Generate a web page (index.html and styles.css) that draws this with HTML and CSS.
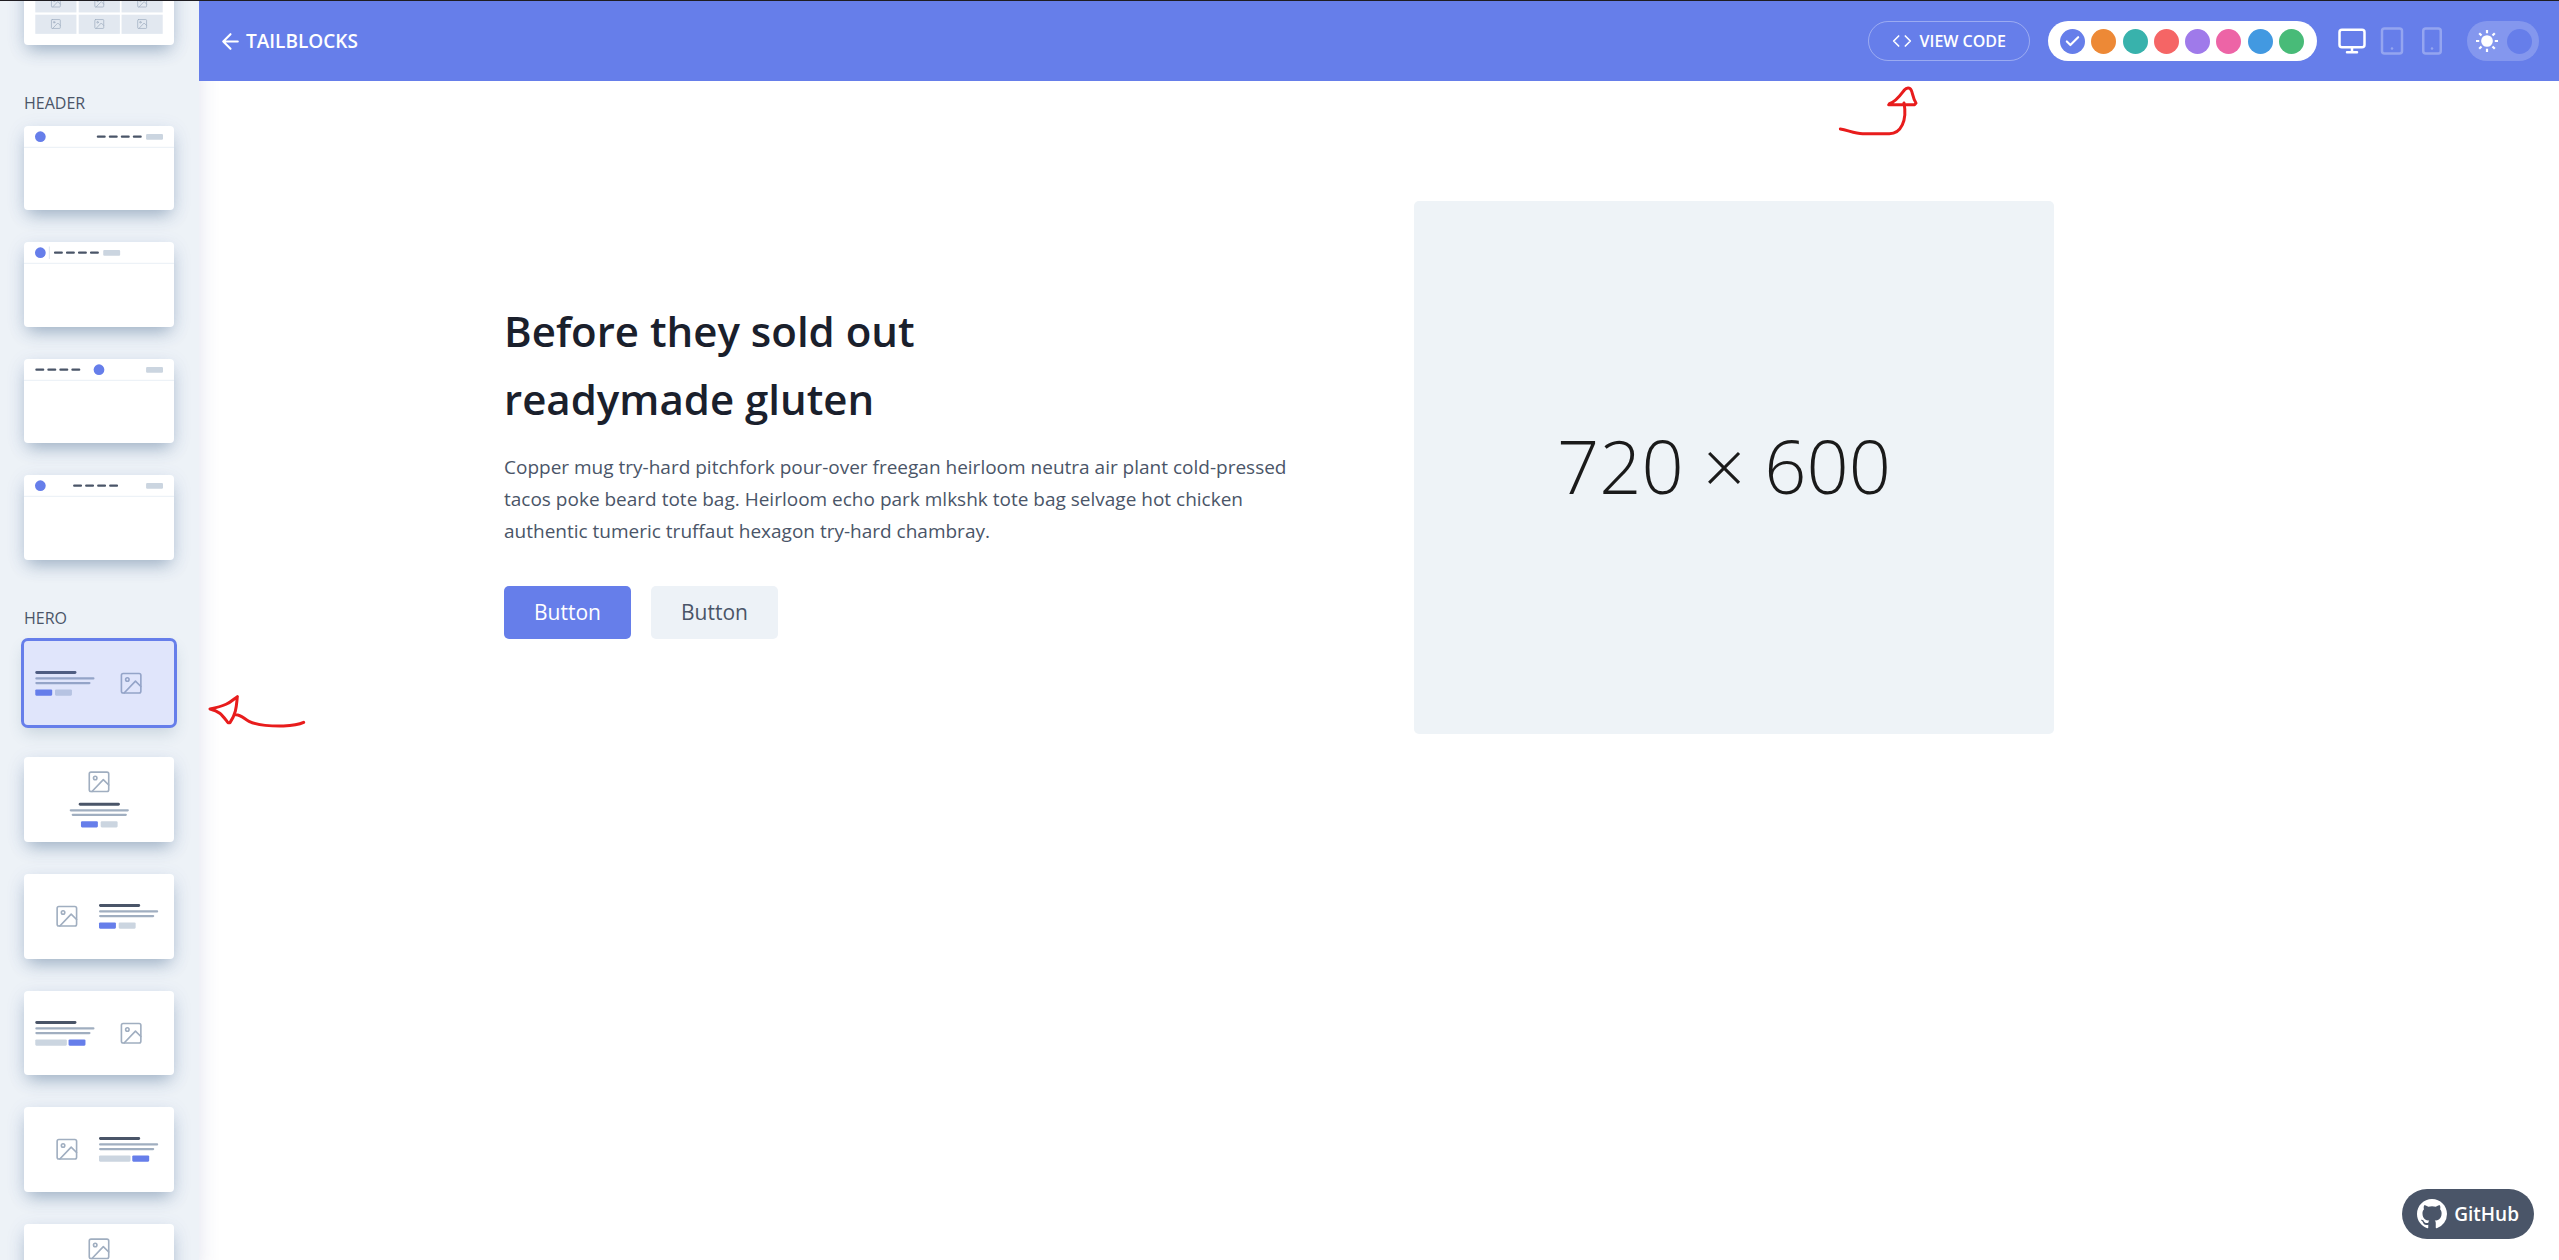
FILE: index.html
```html
<!DOCTYPE html>
<html lang="en">
<head>
<meta charset="utf-8">
<title>Tailblocks</title>
<link rel="stylesheet" href="styles.css">
</head>
<body>
<svg class="defs" aria-hidden="true">
  <defs>
    <symbol id="pic" viewBox="0 0 24 24"><g fill="none" stroke="#a0aec0" stroke-width="1.5" stroke-linecap="round" stroke-linejoin="round"><rect x="3" y="3" width="18" height="18" rx="1.6"/><circle cx="8.5" cy="8.5" r="1.6"/><path d="M21 15l-5-5L5.500 21"/></g></symbol>
    <g id="nav"><path d="M2 19h12M23.300 19h12M44.600 19h12M65.900 19h12" stroke="#4a5568" stroke-width="4" stroke-linecap="round"/></g>
    <g id="bar"><path d="M0 38h266" stroke="#edf2f7" stroke-width="2"/></g>
    <g id="copy"><rect y="53" width="73" height="5.500" rx="2.500" fill="#4a5568"/><rect y="64.500" width="105" height="4" rx="2" fill="#a0aec0"/><rect y="72.500" width="98" height="4" rx="2" fill="#a0aec0"/></g>
    <g id="buttons"><rect width="30" height="11" rx="2" fill="#667eea"/><rect x="35" width="30" height="11" rx="2" fill="#cbd5e0"/></g>
    <g id="form"><rect width="56" height="11" rx="2" fill="#cbd5e0"/><rect x="59" width="30" height="11" rx="2" fill="#667eea"/></g>
    <g id="cell"><rect width="73" height="34" fill="#e2e8f0"/><use href="#pic" x="26" y="6" width="21" height="21"/></g>
  </defs>
</svg>
<div class="app">
  <aside class="sidebar">
    <div class="blocks">
      <div class="group">
        <button class="block" aria-label="Gallery"><svg viewBox="0 0 266 150"><use href="#cell" x="20" y="20"/><use href="#cell" x="97" y="20"/><use href="#cell" x="173" y="20"/><use href="#cell" x="20" y="59"/><use href="#cell" x="97" y="59"/><use href="#cell" x="173" y="59"/><use href="#cell" x="20" y="97"/><use href="#cell" x="97" y="97"/><use href="#cell" x="173" y="97"/></svg></button>
      </div>
      <section class="group">
        <h2 class="group-title">HEADER</h2>
        <button class="block" aria-label="Header A"><svg viewBox="0 0 266 150"><use href="#bar"/><circle cx="29" cy="19" r="9.500" fill="#667eea"/><use href="#nav" x="129"/><rect x="216.500" y="14" width="30" height="10.500" rx="2" fill="#cbd5e0"/></svg></button>
        <button class="block" aria-label="Header B"><svg viewBox="0 0 266 150"><use href="#bar"/><circle cx="29" cy="19" r="9.500" fill="#667eea"/><path d="M45 8v22" stroke="#e2e8f0" stroke-width="2"/><use href="#nav" x="53"/><rect x="140.500" y="14" width="30" height="10.500" rx="2" fill="#cbd5e0"/></svg></button>
        <button class="block" aria-label="Header C"><svg viewBox="0 0 266 150"><use href="#bar"/><circle cx="133" cy="19" r="9.500" fill="#667eea"/><use href="#nav" x="20"/><rect x="216.500" y="14" width="30" height="10.500" rx="2" fill="#cbd5e0"/></svg></button>
        <button class="block" aria-label="Header D"><svg viewBox="0 0 266 150"><use href="#bar"/><circle cx="29" cy="19" r="9.500" fill="#667eea"/><use href="#nav" x="87"/><rect x="216.500" y="14" width="30" height="10.500" rx="2" fill="#cbd5e0"/></svg></button>
      </section>
      <section class="group">
        <h2 class="group-title">HERO</h2>
        <button class="block active" aria-label="Hero A" aria-pressed="true"><svg viewBox="0 0 266 150"><use href="#copy" x="20"/><use href="#buttons" x="20" y="86"/><use href="#pic" x="167" y="52" width="46" height="46"/><path d="M0 0h266v150H0z" fill="#667eea" opacity=".2"/></svg></button>
        <button class="block" aria-label="Hero B"><svg viewBox="0 0 266 150"><use href="#pic" x="110" y="21" width="46" height="46"/><rect x="97" y="81" width="73" height="5.500" rx="2.500" fill="#4a5568"/><rect x="81" y="92.500" width="105" height="4" rx="2" fill="#a0aec0"/><rect x="84.500" y="100.500" width="98" height="4" rx="2" fill="#a0aec0"/><use href="#buttons" x="101" y="114"/></svg></button>
        <button class="block" aria-label="Hero C"><svg viewBox="0 0 266 150"><use href="#pic" x="53" y="52" width="46" height="46"/><use href="#copy" x="133"/><use href="#buttons" x="133" y="86"/></svg></button>
        <button class="block" aria-label="Hero D"><svg viewBox="0 0 266 150"><use href="#copy" x="20"/><use href="#form" x="20" y="86"/><use href="#pic" x="167" y="52" width="46" height="46"/></svg></button>
        <button class="block" aria-label="Hero E"><svg viewBox="0 0 266 150"><use href="#pic" x="53" y="52" width="46" height="46"/><use href="#copy" x="133"/><use href="#form" x="133" y="86"/></svg></button>
        <button class="block" aria-label="Hero F"><svg viewBox="0 0 266 150"><use href="#pic" x="110" y="21" width="46" height="46"/><rect x="97" y="81" width="73" height="5.500" rx="2.500" fill="#4a5568"/><rect x="81" y="92.500" width="105" height="4" rx="2" fill="#a0aec0"/><use href="#form" x="88" y="114"/></svg></button>
      </section>
    </div>
  </aside>
  <div class="page">
    <header class="toolbar">
      <a class="brand" href="#"><svg width="25" height="25" viewBox="0 0 24 24" fill="none" stroke="currentColor" stroke-width="2" stroke-linecap="round" stroke-linejoin="round"><path d="M19 12H5M12 19l-7-7 7-7"/></svg>TAILBLOCKS</a>
      <button class="view-code"><svg width="20" height="20" viewBox="0 0 24 24" fill="none" stroke="currentColor" stroke-width="2" stroke-linecap="round" stroke-linejoin="round"><path d="M16 18l6-6-6-6M8 6l-6 6 6 6"/></svg>VIEW CODE</button>
      <div class="palette" role="radiogroup" aria-label="Theme colour">
        <label class="swatch"><input type="radio" name="theme" class="indigo" aria-label="Indigo" checked><svg width="17" height="17" viewBox="0 0 24 24" fill="none" stroke="#fff" stroke-width="3" stroke-linecap="round" stroke-linejoin="round"><path d="M20 6L9 17l-5-5"/></svg></label>
        <label class="swatch"><input type="radio" name="theme" class="orange" aria-label="Orange"></label>
        <label class="swatch"><input type="radio" name="theme" class="teal" aria-label="Teal"></label>
        <label class="swatch"><input type="radio" name="theme" class="red" aria-label="Red"></label>
        <label class="swatch"><input type="radio" name="theme" class="purple" aria-label="Purple"></label>
        <label class="swatch"><input type="radio" name="theme" class="pink" aria-label="Pink"></label>
        <label class="swatch"><input type="radio" name="theme" class="blue" aria-label="Blue"></label>
        <label class="swatch"><input type="radio" name="theme" class="green" aria-label="Green"></label>
      </div>
      <div class="devices">
        <button class="device current" aria-label="Desktop"><svg width="30" height="30" viewBox="0 0 24 24"><rect x="2" y="3" width="20" height="14" rx="2"/><path d="M8 21h8M12 17v4"/></svg></button>
        <button class="device" aria-label="Tablet"><svg width="30" height="30" viewBox="0 0 24 24"><rect x="4" y="2" width="16" height="20" rx="2"/><path d="M12 18h.01"/></svg></button>
        <button class="device" aria-label="Phone"><svg width="30" height="30" viewBox="0 0 24 24"><rect x="5" y="2" width="14" height="20" rx="2"/><path d="M12 18h.01"/></svg></button>
      </div>
      <label class="mode"><svg width="22" height="22" viewBox="0 0 24 24" fill="#fff" stroke="#fff" stroke-width="2.400"><circle cx="12" cy="12" r="5.200"/><path d="M12 0v3.500M12 20.500V24M0 12h3.500M20.500 12H24M3.500 3.500L6 6M18 18l2.500 2.500M3.500 20.500L6 18M18 6l2.500-2.500"/></svg><input type="checkbox" aria-label="Dark mode"></label>
    </header>
    <main class="preview">
      <section class="hero">
        <div class="hero-text">
          <h1>Before they sold out<br>readymade gluten</h1>
          <p>Copper mug try-hard pitchfork pour-over freegan heirloom neutra air plant cold-pressed tacos poke beard tote bag. Heirloom echo park mlkshk tote bag selvage hot chicken authentic tumeric truffaut hexagon try-hard chambray.</p>
          <div class="actions">
            <button class="btn primary">Button</button>
            <button class="btn">Button</button>
          </div>
        </div>
        <div class="placeholder">720 × 600</div>
      </section>
      <svg class="mark mark-code" width="90" height="60" viewBox="0 0 270 180"><path d="M13 144C35 147 55 158 80 158H160C195 158 214 118 204 66M158 71H236L240 66C231 53 230 36 226 28C221 18 211 20 205 27C195 40 180 63 160 68"/></svg>
      <svg class="mark mark-hero" width="106" height="46" viewBox="0 0 318 138"><path d="M311 97C288 108 265 107 240 108C205 108 170 105 147 94C134 88 123 73 107 74M112 20C93 32 90 45 30 57C60 64 66 75 84 98H90C110 68 109 46 112 20"/></svg>
    </main>
  </div>
</div>
<a class="github" href="#"><svg width="30" height="30" viewBox="0 0 16 16" fill="#fff"><path d="M8 0C3.580 0 0 3.580 0 8c0 3.540 2.290 6.530 5.470 7.590.4.070.55-.17.55-.38 0-.19-.01-.82-.01-1.490-2.010.37-2.530-.49-2.690-.94-.09-.23-.48-.94-.82-1.130-.28-.15-.68-.52-.01-.53.63-.01 1.080.58 1.230.82.72 1.210 1.870.87 2.330.66.07-.52.28-.87.51-1.070-1.780-.2-3.640-.89-3.640-3.950 0-.87.31-1.590.82-2.150-.08-.2-.36-1.020.08-2.120 0 0 .67-.21 2.200.82.64-.18 1.320-.27 2-.27s1.360.09 2 .27c1.530-1.040 2.200-.82 2.200-.82.44 1.100.16 1.920.08 2.120.51.56.82 1.270.82 2.150 0 3.070-1.870 3.750-3.650 3.950.29.25.54.73.54 1.480 0 1.070-.01 1.930-.01 2.200 0 .21.15.46.55.38A8.010 8.010 0 0 0 16 8c0-4.420-3.580-8-8-8z"/></svg>GitHub</a>
</body>
</html>
```
FILE: styles.css
```css
*, *::before, *::after { box-sizing: border-box; }
body {
  margin: 0;
  color: #4a5568;
  background: #fff;
  font-family: "Open Sans", "Noto Sans", sans-serif;
}
h1, h2, p { margin: 0; }
button, input { margin: 0; padding: 0; border: 0; font: inherit; color: inherit; background: none; cursor: pointer; }
a { color: inherit; text-decoration: none; }
svg { display: block; flex: none; }
.defs { position: absolute; width: 0; height: 0; }

.app {
  display: grid;
  grid-template-columns: 199px 1fr;
  height: 100vh;
  border-top: 1px solid #1f1d22;
  overflow: hidden;
}

/* Block list */
.sidebar {
  position: relative;
  z-index: 1;
  min-height: 0;
  padding: 0 25px 0 24px;
  background: #edf2f7;
  box-shadow: 0 10px 20px rgba(60, 70, 140, .16);
  overflow: hidden;
}
/* The list rests scrolled past its first groups */
.blocks { margin-top: -41px; }
.group { display: flex; flex-direction: column; gap: 32px; padding-bottom: 47px; }
.group-title { margin-bottom: -20px; font-size: 16px; line-height: 22px; font-weight: 500; }
.block {
  border-radius: 4px;
  background: #fff;
  box-shadow: 0 8px 16px -4px rgba(50, 90, 120, .4), 0 4px 20px rgba(90, 110, 200, .1);
}
.block svg { width: 100%; height: auto; border-radius: 4px; }
.block.active { box-shadow: 0 0 0 3px #667eea, 0 8px 16px rgba(50, 90, 120, .2); }

/* Toolbar */
.page { position: relative; display: flex; flex-direction: column; min-width: 0; }
.toolbar {
  position: relative;
  z-index: 2;
  display: flex;
  align-items: center;
  height: 80px;
  padding: 0 20px 0 19px;
  color: #fff;
  background: #667eea;
}
.brand { display: flex; align-items: center; gap: 3px; margin-right: auto; font-size: 19px; line-height: 28px; font-weight: 600; }
.view-code {
  display: flex;
  align-items: center;
  gap: 8px;
  height: 40px;
  padding: 0 23px;
  border: 1px solid rgba(255, 255, 255, .35);
  border-radius: 20px;
  font-size: 16px;
  line-height: 22px;
  font-weight: 600;
}
.palette { display: flex; align-items: center; justify-content: space-between; width: 269px; height: 40px; margin-left: 18px; padding: 0 13px 0 12px; border-radius: 20px; background: #fff; }
.swatch { display: grid; place-items: center; }
.swatch > * { grid-area: 1 / 1; }
.swatch svg { pointer-events: none; z-index: 1; }
.swatch input { appearance: none; width: 25px; height: 25px; border-radius: 50%; }
.indigo { background: #667eea; }
.orange { background: #ed8936; }
.teal { background: #38b2ac; }
.red { background: #f56565; }
.purple { background: #9f7aea; }
.pink { background: #ed64a6; }
.blue { background: #4299e1; }
.green { background: #48bb78; }
.devices { display: flex; gap: 10px; margin: 0 20px; }
.device { opacity: .3; }
.device.current { opacity: 1; }
.device svg { fill: none; stroke: currentColor; stroke-width: 2; stroke-linecap: round; stroke-linejoin: round; }
.mode { display: flex; align-items: center; justify-content: space-between; width: 72px; height: 40px; padding: 0 7px 0 9px; border-radius: 20px; background: rgba(255, 255, 255, .2); }
.mode input { appearance: none; width: 25px; height: 25px; border-radius: 50%; background: #667eea; }

/* Preview */
.preview { position: relative; flex: 1; padding: 120px 200px 120px 0; }
.hero { display: flex; align-items: center; justify-content: space-between; gap: 40px; max-width: 1550px; margin: 0 auto; }
.hero-text { max-width: 800px; }
h1 { margin-bottom: 18px; color: #1a202c; font-size: 42px; line-height: 68px; font-weight: 600; }
.hero-text p { margin-bottom: 39px; font-size: 19px; line-height: 32px; }
.actions { display: flex; gap: 20px; }
.btn { width: 127px; height: 53px; border-radius: 5px; background: #edf2f7; font-size: 21px; line-height: 32px; }
.btn.primary { color: #fff; background: #667eea; }
.placeholder {
  display: flex;
  align-items: center;
  justify-content: center;
  flex: 0 1 640px;
  aspect-ratio: 6 / 5;
  padding: 0 20px 4px 0;
  border-radius: 5px;
  color: #1a1a1a;
  background: #eef3f7;
  font-size: 74px;
  line-height: 96px;
  font-weight: 300;
}

/* Hand-drawn pointers over the page */
.mark { position: absolute; fill: none; stroke: #e81c1c; stroke-width: 9; stroke-linecap: round; stroke-linejoin: round; }
.mark-code { top: 0; right: 633px; }
.mark-hero { top: 609px; left: 1px; }

.github {
  position: fixed;
  right: 25px;
  bottom: 21px;
  z-index: 3;
  display: flex;
  align-items: center;
  gap: 7px;
  height: 50px;
  padding: 0 15px;
  border-radius: 25px;
  color: #fff;
  background: #4a5568;
  font-size: 19px;
  line-height: 28px;
  font-weight: 600;
}
```
